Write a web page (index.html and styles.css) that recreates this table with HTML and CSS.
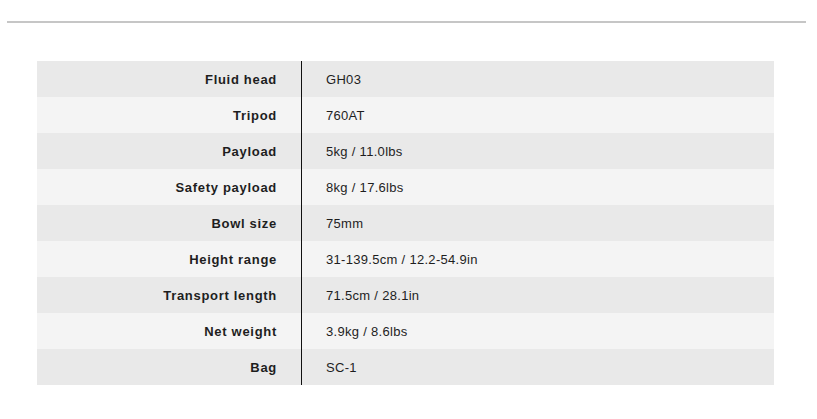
FILE: index.html
```html
<!DOCTYPE html>
<html lang="en">
<head>
<meta charset="utf-8">
<title>Specifications</title>
<link rel="stylesheet" href="styles.css">
</head>
<body>
<div class="page">
  <hr class="rule">
  <div class="specs">
    <div class="row"><div class="label">Fluid head</div><div class="value">GH03</div></div>
    <div class="row"><div class="label">Tripod</div><div class="value">760AT</div></div>
    <div class="row"><div class="label">Payload</div><div class="value">5kg / 11.0lbs</div></div>
    <div class="row"><div class="label">Safety payload</div><div class="value">8kg / 17.6lbs</div></div>
    <div class="row"><div class="label">Bowl size</div><div class="value">75mm</div></div>
    <div class="row"><div class="label">Height range</div><div class="value">31-139.5cm / 12.2-54.9in</div></div>
    <div class="row"><div class="label">Transport length</div><div class="value">71.5cm / 28.1in</div></div>
    <div class="row"><div class="label">Net weight</div><div class="value">3.9kg / 8.6lbs</div></div>
    <div class="row"><div class="label">Bag</div><div class="value">SC-1</div></div>
  </div>
</div>
</body>
</html>
```
FILE: styles.css
```css
html, body {
  margin: 0;
  padding: 0;
  background: #ffffff;
}

.page {
  padding-top: 21px;
  font-family: "Liberation Sans", Arial, Helvetica, sans-serif;
  color: #1e1e1e;
}

.rule {
  margin: 0 11px 0 7px;
  border: 0;
  height: 2px;
  background: #c6c6c6;
}

.specs {
  margin: 38px 43px 0 37px;
  display: flex;
  flex-direction: column;
}

.row {
  display: flex;
  height: 36px;
  background: #e9e9e9;
}

.row:nth-child(even) {
  background: #f4f4f4;
}

.label {
  width: 240px;
  padding-right: 24px;
  border-right: 1px solid #111111;
  display: flex;
  align-items: center;
  justify-content: flex-end;
  font-weight: bold;
  font-size: 13px;
  letter-spacing: 0.7px;
}

.value {
  padding-left: 24px;
  display: flex;
  align-items: center;
  font-size: 13px;
  letter-spacing: 0.3px;
}
```
